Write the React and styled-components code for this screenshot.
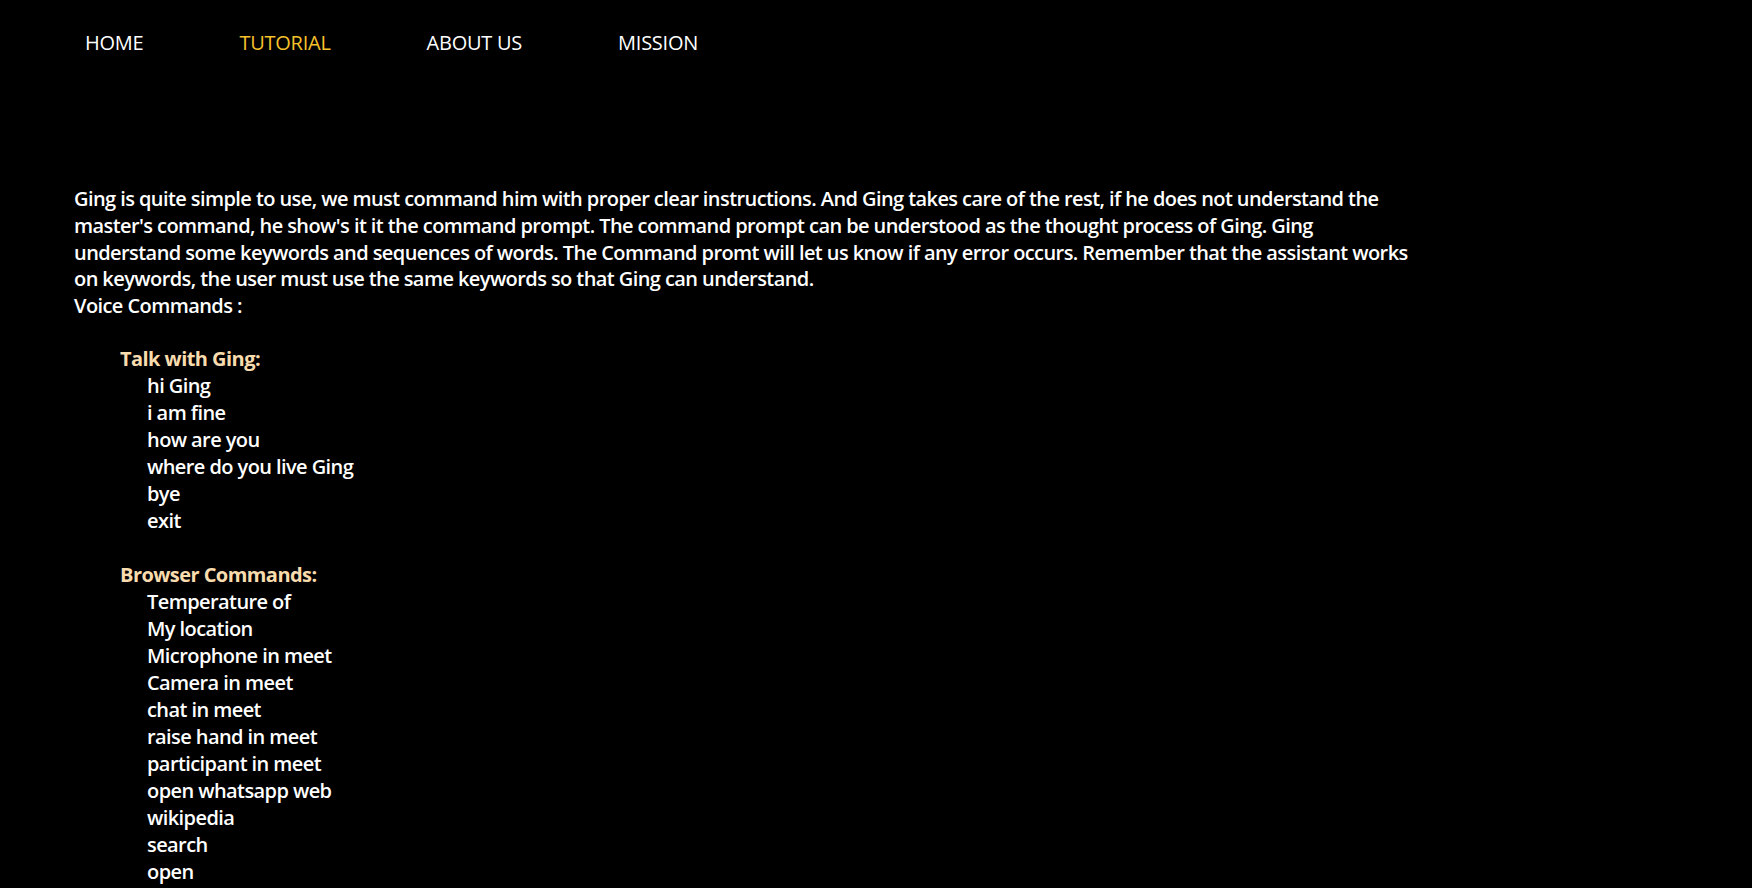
import React from "react";
import styled, { createGlobalStyle } from "styled-components";

const GlobalStyle = createGlobalStyle`
  html, body {
    margin: 0;
    padding: 0;
    background: #000;
  }
  body {
    color: #fff;
    font-family: "Open Sans", "Noto Sans", sans-serif;
  }
`;

const Page = styled.div`
  min-height: 100vh;
  background: #000;
  display: flex;
  flex-direction: column;
`;

const NavBar = styled.nav`
  display: flex;
  align-items: center;
  gap: 96px;
  padding: 29px 0 0 85px;
`;

const NavLink = styled.a`
  font-size: 20px;
  font-weight: 500;
  line-height: 27px;
  letter-spacing: -0.25px;
  text-decoration: none;
  color: ${(p) => (p.$active ? "#f7c12b" : "#fff")};
  cursor: pointer;
`;

const Content = styled.main`
  padding: 130px 0 0 74px;
  max-width: 1338px;
  font-size: 20px;
  font-weight: 600;
  line-height: 26.8px;
  letter-spacing: -0.58px;
`;

const Intro = styled.p`
  margin: 0 0 26.5px;
`;

const Section = styled.section`
  display: flex;
  flex-direction: column;
  padding-left: 46px;
  margin-bottom: 26.95px;
  line-height: 26.95px;
`;

const SectionTitle = styled.h3`
  margin: 0;
  font-size: 20px;
  font-weight: 700;
  line-height: 26.95px;
  letter-spacing: -0.55px;
  color: #f9dcae;
`;

const CommandList = styled.ul`
  list-style: none;
  margin: 0;
  padding: 0 0 0 27px;
`;

const Command = styled.li`
  margin: 0;
`;

const navItems = ["HOME", "TUTORIAL", "ABOUT US", "MISSION"];

const sections = [
  {
    title: "Talk with Ging:",
    items: ["hi Ging", "i am fine", "how are you", "where do you live Ging", "bye", "exit"],
  },
  {
    title: "Browser Commands:",
    items: [
      "Temperature of",
      "My location",
      "Microphone in meet",
      "Camera in meet",
      "chat in meet",
      "raise hand in meet",
      "participant in meet",
      "open whatsapp web",
      "wikipedia",
      "search",
      "open",
    ],
  },
];

export default function App() {
  return (
    <Page>
      <GlobalStyle />
      <NavBar>
        {navItems.map((n) => (
          <NavLink key={n} $active={n === "TUTORIAL"}>
            {n}
          </NavLink>
        ))}
      </NavBar>
      <Content>
        <Intro>
          Ging is quite simple to use, we must command him with proper clear instructions. And Ging takes care of
          the rest, if he does not understand the master's command, he show's it it the command prompt. The command
          prompt can be understood as the thought process of Ging. Ging understand some keywords and sequences of
          words. The Command promt will let us know if any error occurs. Remember that the assistant works on
          keywords, the user must use the same keywords so that Ging can understand.
          <br />
          Voice Commands :
        </Intro>
        {sections.map((s) => (
          <Section key={s.title}>
            <SectionTitle>{s.title}</SectionTitle>
            <CommandList>
              {s.items.map((i) => (
                <Command key={i}>{i}</Command>
              ))}
            </CommandList>
          </Section>
        ))}
      </Content>
    </Page>
  );
}
